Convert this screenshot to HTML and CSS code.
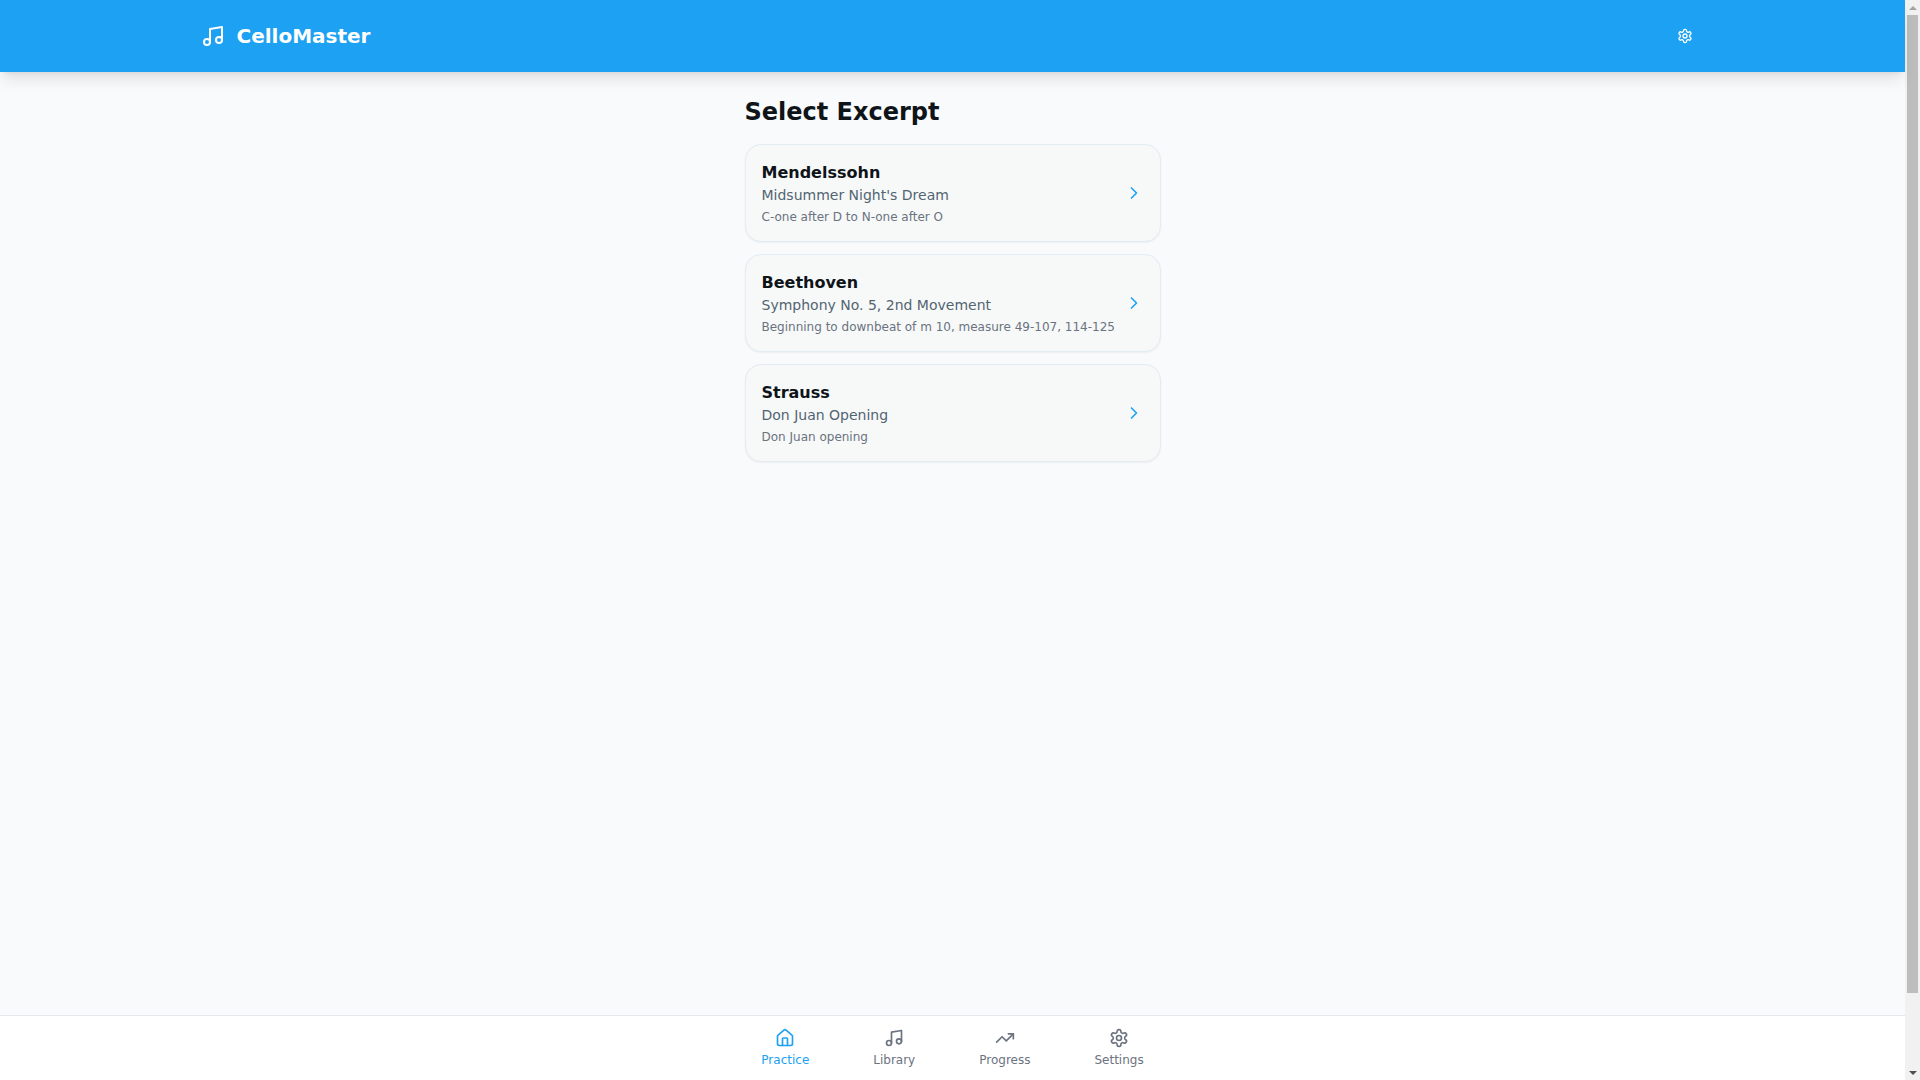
FILE: index.html
```html
<!DOCTYPE html>
<html lang="en">
<head>
<meta charset="utf-8">
<title>CelloMaster</title>
<link rel="stylesheet" href="styles.css">
</head>
<body>
<div class="app">
  <header class="topbar">
    <div class="topbar-inner">
      <div class="brand">
        <svg class="icon icon-24" viewBox="0 0 24 24"><path d="M9 18V5l12-2v13"/><circle cx="6" cy="18" r="3"/><circle cx="18" cy="16" r="3"/></svg>
        <h1 class="brand-name">CelloMaster</h1>
      </div>
      <button class="settings-btn" type="button" aria-label="Settings">
        <svg class="icon icon-16" viewBox="0 0 24 24"><path d="M12.22 2h-.44a2 2 0 0 0-2 2v.18a2 2 0 0 1-1 1.73l-.43.25a2 2 0 0 1-2 0l-.15-.08a2 2 0 0 0-2.73.73l-.22.38a2 2 0 0 0 .73 2.73l.15.1a2 2 0 0 1 1 1.72v.51a2 2 0 0 1-1 1.74l-.15.09a2 2 0 0 0-.73 2.73l.22.38a2 2 0 0 0 2.73.73l.15-.08a2 2 0 0 1 2 0l.43.25a2 2 0 0 1 1 1.73V20a2 2 0 0 0 2 2h.44a2 2 0 0 0 2-2v-.18a2 2 0 0 1 1-1.73l.43-.25a2 2 0 0 1 2 0l.15.08a2 2 0 0 0 2.73-.73l.22-.39a2 2 0 0 0-.73-2.73l-.15-.08a2 2 0 0 1-1-1.74v-.5a2 2 0 0 1 1-1.74l.15-.09a2 2 0 0 0 .73-2.73l-.22-.38a2 2 0 0 0-2.73-.73l-.15.08a2 2 0 0 1-2 0l-.43-.25a2 2 0 0 1-1-1.73V4a2 2 0 0 0-2-2z"/><circle cx="12" cy="12" r="3"/></svg>
      </button>
    </div>
  </header>

  <main class="main">
    <h2 class="page-title">Select Excerpt</h2>
    <div class="card-list">
      <a class="card">
        <div class="card-text">
          <div class="composer">Mendelssohn</div>
          <div class="piece">Midsummer Night's Dream</div>
          <div class="note">C-one after D to N-one after O</div>
        </div>
        <svg class="icon icon-20 chevron" viewBox="0 0 24 24"><path d="m9 18 6-6-6-6"/></svg>
      </a>
      <a class="card">
        <div class="card-text">
          <div class="composer">Beethoven</div>
          <div class="piece">Symphony No. 5, 2nd Movement</div>
          <div class="note">Beginning to downbeat of m 10, measure 49-107, 114-125</div>
        </div>
        <svg class="icon icon-20 chevron" viewBox="0 0 24 24"><path d="m9 18 6-6-6-6"/></svg>
      </a>
      <a class="card">
        <div class="card-text">
          <div class="composer">Strauss</div>
          <div class="piece">Don Juan Opening</div>
          <div class="note">Don Juan opening</div>
        </div>
        <svg class="icon icon-20 chevron" viewBox="0 0 24 24"><path d="m9 18 6-6-6-6"/></svg>
      </a>
    </div>
  </main>

  <nav class="bottom-nav">
    <a class="nav-item active">
      <svg class="icon icon-20" viewBox="0 0 24 24"><path d="M15 21v-8a1 1 0 0 0-1-1h-4a1 1 0 0 0-1 1v8"/><path d="M3 10a2 2 0 0 1 .709-1.528l7-5.999a2 2 0 0 1 2.582 0l7 5.999A2 2 0 0 1 21 10v9a2 2 0 0 1-2 2H5a2 2 0 0 1-2-2z"/></svg>
      <span>Practice</span>
    </a>
    <a class="nav-item">
      <svg class="icon icon-20" viewBox="0 0 24 24"><path d="M9 18V5l12-2v13"/><circle cx="6" cy="18" r="3"/><circle cx="18" cy="16" r="3"/></svg>
      <span>Library</span>
    </a>
    <a class="nav-item">
      <svg class="icon icon-20" viewBox="0 0 24 24"><polyline points="22 7 13.5 15.5 8.5 10.5 2 17"/><polyline points="16 7 22 7 22 13"/></svg>
      <span>Progress</span>
    </a>
    <a class="nav-item">
      <svg class="icon icon-20" viewBox="0 0 24 24"><path d="M12.22 2h-.44a2 2 0 0 0-2 2v.18a2 2 0 0 1-1 1.73l-.43.25a2 2 0 0 1-2 0l-.15-.08a2 2 0 0 0-2.73.73l-.22.38a2 2 0 0 0 .73 2.73l.15.1a2 2 0 0 1 1 1.72v.51a2 2 0 0 1-1 1.74l-.15.09a2 2 0 0 0-.73 2.73l.22.38a2 2 0 0 0 2.73.73l.15-.08a2 2 0 0 1 2 0l.43.25a2 2 0 0 1 1 1.73V20a2 2 0 0 0 2 2h.44a2 2 0 0 0 2-2v-.18a2 2 0 0 1 1-1.73l.43-.25a2 2 0 0 1 2 0l.15.08a2 2 0 0 0 2.73-.73l.22-.39a2 2 0 0 0-.73-2.73l-.15-.08a2 2 0 0 1-1-1.74v-.5a2 2 0 0 1 1-1.74l.15-.09a2 2 0 0 0 .73-2.73l-.22-.38a2 2 0 0 0-2.73-.73l-.15.08a2 2 0 0 1-2 0l-.43-.25a2 2 0 0 1-1-1.73V4a2 2 0 0 0-2-2z"/><circle cx="12" cy="12" r="3"/></svg>
      <span>Settings</span>
    </a>
  </nav>
</div>
<div class="scrollbar" aria-hidden="true">
  <div class="scroll-btn"><span class="arrow-up"></span></div>
  <div class="scroll-track"><div class="scroll-thumb"></div></div>
  <div class="scroll-btn"><span class="arrow-down"></span></div>
</div>
</body>
</html>
```

FILE: styles.css
```css
* { box-sizing: border-box; }

html, body { margin: 0; padding: 0; }

body {
  height: 100vh;
  overflow: hidden;
  display: flex;
  font-family: "DejaVu Sans", sans-serif;
  background: #f9fafb;
  color: #0f1419;
}

.app {
  flex: 1;
  min-width: 0;
  display: flex;
  flex-direction: column;
}

.icon {
  fill: none;
  stroke: currentColor;
  stroke-width: 2;
  stroke-linecap: round;
  stroke-linejoin: round;
  display: block;
  flex: none;
}
.icon-24 { width: 24px; height: 24px; }
.icon-20 { width: 20px; height: 20px; }
.icon-16 { width: 16px; height: 16px; }

.topbar {
  position: relative;
  background: #1da1f2;
  color: #fff;
  height: 72px;
  flex: none;
  box-shadow: 0 10px 15px -3px rgba(0, 0, 0, 0.1), 0 4px 6px -4px rgba(0, 0, 0, 0.1);
}
.topbar-inner {
  max-width: 1536px;
  height: 100%;
  margin: 0 auto;
  padding: 0 16px;
  display: flex;
  align-items: center;
  justify-content: space-between;
}
.brand { display: flex; align-items: center; gap: 12px; }
.brand-name { margin: 0; font-size: 20px; line-height: 28px; font-weight: 700; }
.settings-btn {
  padding: 12px;
  border: 0;
  background: none;
  color: inherit;
  border-radius: 9999px;
}

.main {
  flex: 1;
  width: 100%;
  max-width: 448px;
  margin: 0 auto;
  padding: 24px 16px 0;
}
.page-title { margin: 0 0 16px; font-size: 24px; line-height: 32px; font-weight: 700; }

.card-list { display: flex; flex-direction: column; gap: 12px; }
.card {
  display: flex;
  align-items: center;
  justify-content: space-between;
  padding: 16px;
  background: #f7f9f9;
  border: 1px solid #e1ecf4;
  border-radius: 16px;
  box-shadow: 0 1px 2px rgba(0, 0, 0, 0.05);
}
.composer { font-size: 16px; line-height: 24px; font-weight: 700; }
.piece { font-size: 14px; line-height: 20px; color: #536471; }
.note { margin-top: 4px; font-size: 12px; line-height: 16px; color: #6b7280; }
.chevron { color: #1da1f2; }

.bottom-nav {
  flex: none;
  height: 65px;
  background: #fff;
  border-top: 1px solid #e5e7eb;
  display: flex;
  justify-content: center;
  gap: 64px;
}
.nav-item {
  display: flex;
  flex-direction: column;
  align-items: center;
  justify-content: center;
  gap: 4px;
  color: #6b7280;
  font-size: 12px;
  line-height: 16px;
}
.nav-item.active { color: #1da1f2; }

.scrollbar {
  flex: none;
  width: 15px;
  display: flex;
  flex-direction: column;
  background: #f1f1f1;
}
.scroll-btn {
  flex: none;
  height: 15px;
  display: flex;
  align-items: center;
  justify-content: center;
}
.arrow-up, .arrow-down {
  width: 0;
  height: 0;
  border-left: 4px solid transparent;
  border-right: 4px solid transparent;
}
.arrow-up { border-bottom: 4px solid #a3a3a3; }
.arrow-down { border-top: 4px solid #505050; }
.scroll-track {
  flex: 1;
  padding: 0 2px;
}
.scroll-thumb {
  height: 978px;
  background: #bdbdbd;
}
```
